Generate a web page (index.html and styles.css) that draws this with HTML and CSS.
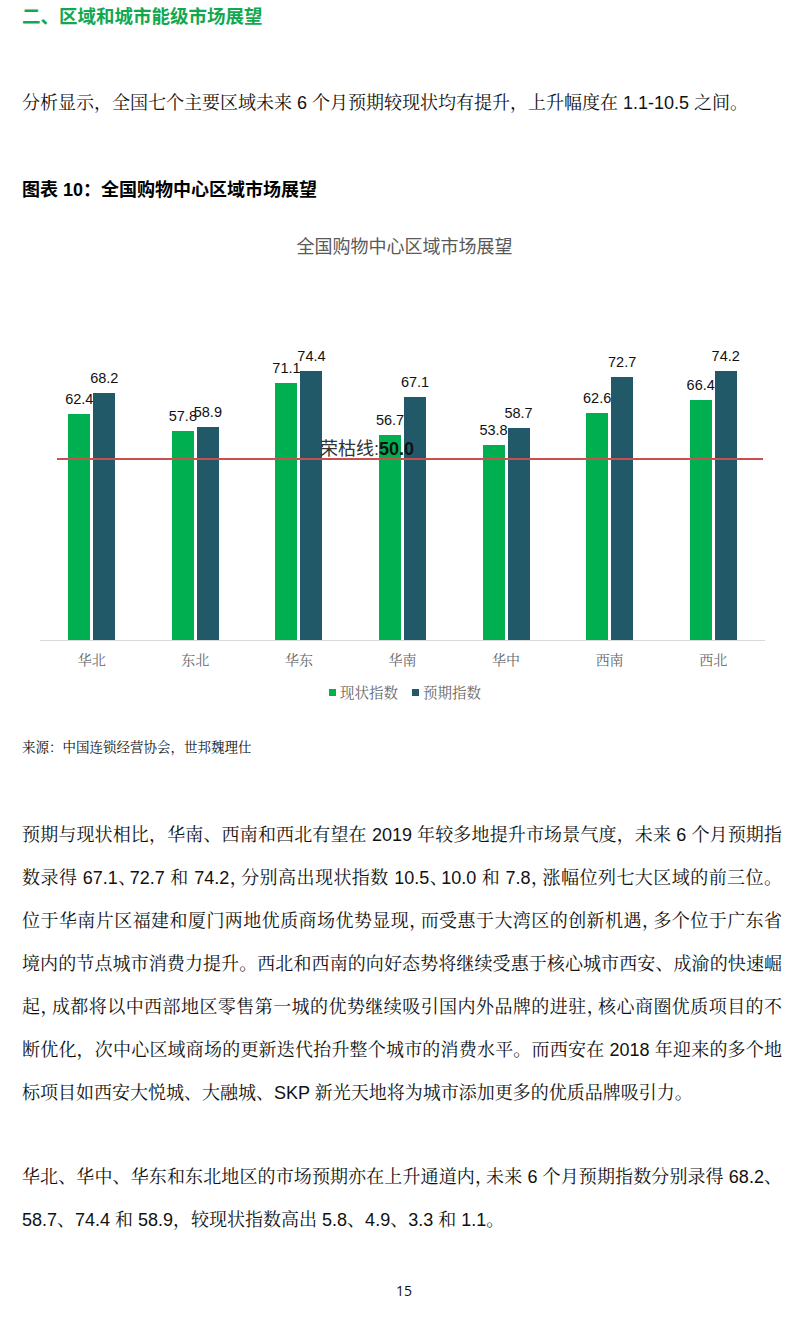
FILE: index.html
```html
<!DOCTYPE html>
<html lang="zh-CN">
<head>
<meta charset="utf-8">
<title>二、区域和城市能级市场展望</title>
<link rel="stylesheet" href="styles.css">
</head>
<body>
<div class="page">
  <h2 class="section-title">二、区域和城市能级市场展望</h2>

  <p class="para intro">分析显示，全国七个主要区域未来 6 个月预期较现状均有提升，上升幅度在 1.1-10.5 之间。</p>

  <h3 class="fig-caption">图表 10：全国购物中心区域市场展望</h3>

  <div class="chart">
    <div class="chart-title">全国购物中心区域市场展望</div>
    <div class="plot">
      <div class="cat">
        <div class="bar-col"><span class="val">62.4</span><div class="bar now" style="height:226px"></div></div>
        <div class="bar-col"><span class="val">68.2</span><div class="bar exp" style="height:247px"></div></div>
      </div>
      <div class="cat">
        <div class="bar-col"><span class="val">57.8</span><div class="bar now" style="height:209px"></div></div>
        <div class="bar-col"><span class="val">58.9</span><div class="bar exp" style="height:213px"></div></div>
      </div>
      <div class="cat">
        <div class="bar-col"><span class="val">71.1</span><div class="bar now" style="height:257px"></div></div>
        <div class="bar-col"><span class="val">74.4</span><div class="bar exp" style="height:269px"></div></div>
      </div>
      <div class="cat">
        <div class="bar-col"><span class="val">56.7</span><div class="bar now" style="height:205px"></div></div>
        <div class="bar-col"><span class="val">67.1</span><div class="bar exp" style="height:243px"></div></div>
      </div>
      <div class="cat">
        <div class="bar-col"><span class="val">53.8</span><div class="bar now" style="height:195px"></div></div>
        <div class="bar-col"><span class="val">58.7</span><div class="bar exp" style="height:212px"></div></div>
      </div>
      <div class="cat">
        <div class="bar-col"><span class="val">62.6</span><div class="bar now" style="height:227px"></div></div>
        <div class="bar-col"><span class="val">72.7</span><div class="bar exp" style="height:263px"></div></div>
      </div>
      <div class="cat">
        <div class="bar-col"><span class="val">66.4</span><div class="bar now" style="height:240px"></div></div>
        <div class="bar-col"><span class="val">74.2</span><div class="bar exp" style="height:269px"></div></div>
      </div>
      <div class="line50"></div>
      <div class="line50-label">荣枯线:<b>50.0</b></div>
    </div>
    <div class="cats">
      <span>华北</span><span>东北</span><span>华东</span><span>华南</span><span>华中</span><span>西南</span><span>西北</span>
    </div>
    <div class="legend">
      <span class="legend-item"><i class="swatch now"></i>现状指数</span>
      <span class="legend-item"><i class="swatch exp"></i>预期指数</span>
    </div>
  </div>

  <p class="source">来源：中国连锁经营协会，世邦魏理仕</p>

  <p class="para analysis">
    <span class="ln">预期与现状相比，华南、西南和西北有望在 2019 年较多地提升市场景气度，未来 6 个月预期指</span>
    <span class="ln">数录得 67.1<span class="cp">、</span>72.7 和 74.2<span class="cp">，</span>分别高出现状指数 10.5<span class="cp">、</span>10.0 和 7.8<span class="cp">，</span>涨幅位列七大区域的前三位。</span>
    <span class="ln">位于华南片区福建和厦门两地优质商场优势显现<span class="cp">，</span>而受惠于大湾区的创新机遇<span class="cp">，</span>多个位于广东省</span>
    <span class="ln">境内的节点城市消费力提升。西北和西南的向好态势将继续受惠于核心城市西安、成渝的快速崛</span>
    <span class="ln">起<span class="cp">，</span>成都将以中西部地区零售第一城的优势继续吸引国内外品牌的进驻<span class="cp">，</span>核心商圈优质项目的不</span>
    <span class="ln">断优化，次中心区域商场的更新迭代抬升整个城市的消费水平。而西安在 2018 年迎来的多个地</span>
    <span class="ln end">标项目如西安大悦城、大融城、SKP 新光天地将为城市添加更多的优质品牌吸引力。</span>
  </p>

  <p class="para outlook">
    <span class="ln">华北、华中、华东和东北地区的市场预期亦在上升通道内<span class="cp">，</span>未来 6 个月预期指数分别录得 68.2、</span>
    <span class="ln end">58.7、74.4 和 58.9，较现状指数高出 5.8、4.9、3.3 和 1.1。</span>
  </p>

  <div class="pageno">15</div>
</div>
</body>
</html>
```

FILE: styles.css
```css
body {
  margin: 0;
  background: #ffffff;
  color: #111111;
  font-family: "Liberation Sans", "Noto Serif CJK SC", "Noto Sans CJK SC", serif;
}

.page {
  width: 800px;
  box-sizing: border-box;
  padding: 0 18px 0 22px;
}

.section-title {
  margin: 0;
  font-family: "Liberation Sans", "Noto Sans CJK SC", sans-serif;
  font-weight: bold;
  font-size: 18.5px;
  line-height: 34px;
  color: #12a850;
}

.para {
  margin: 0;
  font-size: 18px;
  line-height: 43px;
}

.intro {
  margin-top: 47.5px;
}

.fig-caption {
  margin: 50.5px 0 0;
  font-family: "Liberation Sans", "Noto Sans CJK SC", sans-serif;
  font-weight: bold;
  font-size: 18px;
  line-height: 30px;
  color: #000000;
}

.chart {
  margin-top: 28px;
}

.chart-title {
  text-align: center;
  padding-left: 5px;
  font-family: "Noto Sans CJK SC", sans-serif;
  font-size: 18px;
  line-height: 24px;
  color: #595959;
}

.plot {
  position: relative;
  margin-left: 18px;
  width: 725px;
  height: 383px;
  border-bottom: 1px solid #d9d9d9;
  display: grid;
  grid-template-columns: repeat(7, 1fr);
  align-items: end;
}

.cat {
  display: flex;
  justify-content: center;
  align-items: flex-end;
  gap: 3px;
}

.bar-col {
  width: 22px;
  display: flex;
  flex-direction: column;
  align-items: center;
}

.val {
  font-family: "Liberation Sans", sans-serif;
  font-size: 14.5px;
  line-height: 14px;
  color: #111111;
  margin-bottom: 8px;
  white-space: nowrap;
}

.bar {
  width: 22px;
}

.now {
  background: #00b050;
}

.exp {
  background: #215968;
}

.line50 {
  position: absolute;
  left: 17px;
  width: 706px;
  bottom: 180px;
  height: 2px;
  background: #c9504e;
}

.line50-label {
  position: absolute;
  left: 280px;
  bottom: 182px;
  font-family: "Liberation Sans", "Noto Sans CJK SC", sans-serif;
  font-size: 18px;
  line-height: 18px;
  color: #333333;
  white-space: nowrap;
}

.line50-label b {
  color: #111111;
}

.cats {
  margin: 8px 0 0 18px;
  width: 725px;
  display: grid;
  grid-template-columns: repeat(7, 1fr);
  text-align: center;
  font-family: "Noto Serif CJK SC", "Noto Sans CJK SC", serif;
  font-size: 14px;
  line-height: 20px;
  color: #666666;
}

.legend {
  margin-top: 13px;
  padding-left: 6px;
  display: flex;
  justify-content: center;
  gap: 14px;
  font-family: "Noto Serif CJK SC", "Noto Sans CJK SC", serif;
  font-size: 14.5px;
  line-height: 20px;
  color: #666666;
}

.legend-item {
  display: flex;
  align-items: center;
  gap: 4px;
}

.swatch {
  display: block;
  width: 7px;
  height: 7px;
}

.source {
  margin: 36px 0 0;
  font-size: 13.5px;
  line-height: 20px;
  color: #111111;
}

.analysis {
  margin-top: 55.5px;
}

.outlook {
  margin-top: 41px;
}

.ln {
  display: block;
  text-align: justify;
  text-align-last: justify;
}

.ln.end {
  text-align-last: auto;
}

.cp {
  letter-spacing: -7px;
}

.pageno {
  margin-top: 39.5px;
  padding-left: 4px;
  text-align: center;
  font-family: "Open Sans", sans-serif;
  font-size: 14px;
  line-height: 20px;
  color: #111111;
}
```
